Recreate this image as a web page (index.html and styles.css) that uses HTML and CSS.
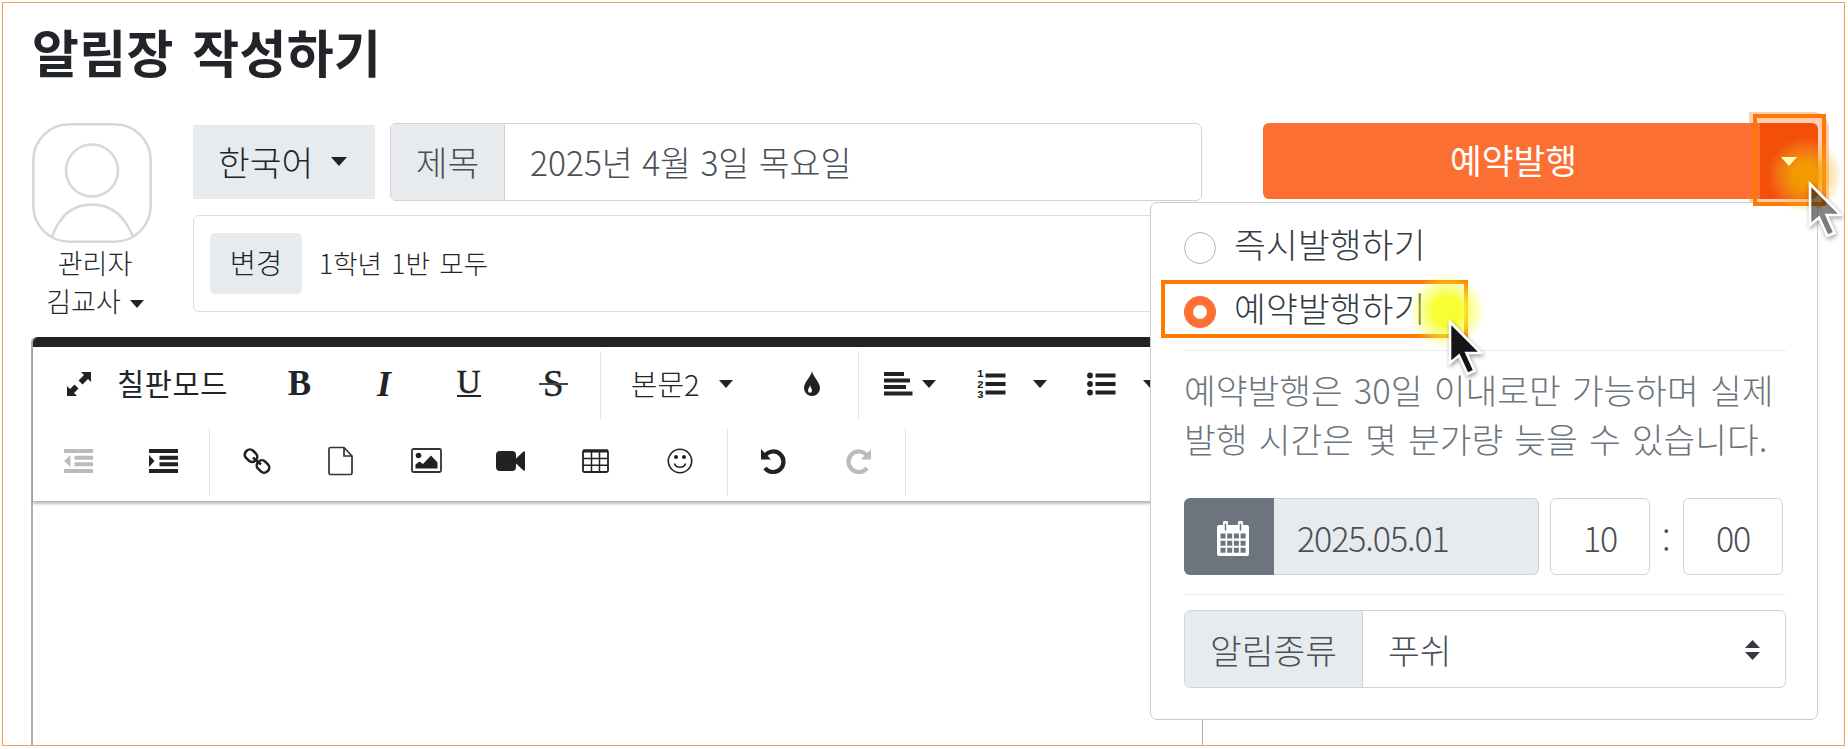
FILE: index.html
```html
<!DOCTYPE html>
<html lang="ko">
<head>
  <meta charset="UTF-8">
  <meta name="viewport" content="width=device-width, initial-scale=1">
  <title>알림장 작성하기</title>
  <link rel="stylesheet" href="styles.css">
</head>
<body>

<div class="page">
  <h1>알림장 작성하기</h1>

  <div class="compose">
    <div class="author">
      <svg class="avatar" viewBox="0 0 120 120">
        <rect x="1.3" y="1.3" width="117.4" height="117.4" rx="36"/>
        <circle cx="60" cy="47.5" r="26"/>
        <path d="M20 114C28 91 42 81.500 60 81.500S92 91 101 114"/>
      </svg>
      <div class="role">관리자</div>
      <div class="name">김교사<i class="caret"></i></div>
    </div>

    <div class="fields">
      <div class="title-row">
        <div class="lang">한국어<i class="caret"></i></div>
        <div class="input-group">
          <span class="addon">제목</span>
          <span class="value">2025년 4월 3일 목요일</span>
        </div>
      </div>
      <div class="target">
        <span class="change">변경</span>
        <span class="target-name">1학년 1반 모두</span>
      </div>
    </div>

    <div class="publish">
      <div class="btn-publish">예약발행</div>
      <div class="btn-toggle"><i class="caret"></i></div>

      <div class="dropdown">
        <div class="option"><span class="radio"></span><span class="option-text">즉시발행하기</span></div>
        <div class="option"><span class="radio checked"></span><span class="option-text">예약발행하기</span></div>
        <p class="help">예약발행은 30일 이내로만 가능하며 실제<br>발행 시간은 몇 분가량 늦을 수 있습니다.</p>
        <div class="datetime">
          <span class="cal">
            <svg width="32" height="36" viewBox="0 0 32 36">
              <path fill="#fff" d="M2 4h4V2a2.500 2.500 0 0 1 5 0v2h10V2a2.500 2.500 0 0 1 5 0v2h4a2 2 0 0 1 2 2v27a2 2 0 0 1-2 2H2a2 2 0 0 1-2-2V6a2 2 0 0 1 2-2z"/>
              <path stroke="#6c757d" stroke-width="1.500" d="M8.500 2.500v7M23.500 2.500v7"/>
              <path stroke="#6c757d" stroke-width="5" stroke-dasharray="5 1.700" d="M3.500 15h25.500M3.500 22.200h25.500M3.500 29.200h25.500"/>
            </svg>
          </span>
          <span class="date">2025.05.01</span>
          <span class="time">10</span>
          <span class="colon">:</span>
          <span class="time">00</span>
        </div>
        <div class="input-group kind">
          <span class="addon">알림종류</span>
          <span class="value">푸쉬</span>
          <svg class="sort" width="15" height="20" viewBox="0 0 15 20"><path fill="#343a40" d="M7.500 0L15 8H0zM7.500 20L0 12h15z"/></svg>
        </div>
      </div>
    </div>
  </div>

  <div class="editor">
    <div class="toolbar">
      <div class="tools">
        <div class="tool board">
          <svg width="26" height="26" viewBox="0 0 26 26"><path fill="#222" d="M15 1h10v10l-3-3-5.500 5.500-4-4L18 4zM11 25H1V15l3 3 4.500-4.500 4 4L8 22z"/><path stroke="#fff" stroke-width="1.800" d="M8 8l10 10"/></svg>
          <b>칠판모드</b>
        </div>
        <div class="tool serif bold">B</div>
        <div class="tool serif italic">I</div>
        <div class="tool serif"><span class="under">U</span></div>
        <div class="tool serif"><span class="strike">S</span></div>
        <div class="sep"></div>
        <div class="tool format">본문2<i class="caret"></i></div>
        <div class="tool"><svg width="18" height="26" viewBox="0 0 18 26"><path fill="#222" d="M9 0c1 6 8 11 8 17a8 8 0 0 1-16 0C1 11 8 6 9 0z"/><path fill="#fff" d="M7 14c.5 2.500 2 3.500 2 5.500a2 2.200 0 0 1-4 0c0-2 1.600-3 2-5.500z"/></svg></div>
        <div class="sep"></div>
        <div class="tool align"><svg width="29" height="24" viewBox="0 0 29 24"><path stroke="#222" stroke-width="4" d="M0 2h20M0 8.500h26M0 15h22M0 21.500h28.500"/></svg><i class="caret"></i></div>
        <div class="tool list">
          <svg width="29" height="34" viewBox="0 -2 29 34"><path stroke="#222" stroke-width="4" d="M8.500 6.500h20M8.500 15h20M8.500 23.500h20"/><g class="nums"><text x="0" y="8">1</text><text x="0" y="18.500">2</text><text x="0" y="29">3</text></g></svg>
          <i class="caret"></i>
        </div>
        <div class="tool list">
          <svg width="29" height="24" viewBox="0 0 29 24"><path stroke="#222" stroke-width="4" d="M8.500 3.500h20M8.500 12h20M8.500 20.500h20"/><g fill="#222"><circle cx="3" cy="3.500" r="2.900"/><circle cx="3" cy="12" r="2.900"/><circle cx="3" cy="20.500" r="2.900"/></g></svg>
          <i class="caret"></i>
        </div>
      </div>

      <div class="tools">
        <div class="tool"><svg width="29" height="24" viewBox="0 0 29 24"><path stroke="#bbb" stroke-width="4" d="M0 2h29M10.500 8.700h18.500M10.500 15.300h18.500M0 22h29"/><path fill="#bbb" d="M6.500 6v12L0 12z"/></svg></div>
        <div class="tool"><svg width="29" height="24" viewBox="0 0 29 24"><path stroke="#222" stroke-width="4" d="M0 2h29M10.500 8.700h18.500M10.500 15.300h18.500M0 22h29"/><path fill="#222" d="M0 6v12l5.500-6z"/></svg></div>
        <div class="sep"></div>
        <div class="tool"><svg width="28" height="28" viewBox="0 0 28 28" fill="none" stroke="#222" stroke-width="2.600"><rect x="1.500" y="3.700" width="13" height="10" rx="4.500" transform="rotate(45 8 8.700)"/><rect x="13.500" y="14.500" width="13" height="10" rx="4.500" transform="rotate(45 20 19.500)"/><path d="M10 10.500l8 7"/></svg></div>
        <div class="tool"><svg width="26" height="30" viewBox="0 0 26 30" fill="none" stroke="#333" stroke-width="1.700"><path d="M2.500 1.500H16l8 8.500v17a1.500 1.500 0 0 1-1.500 1.500h-20A1.500 1.500 0 0 1 1 27V3a1.500 1.500 0 0 1 1.500-1.500zM16 1.500V10h8"/></svg></div>
        <div class="tool"><svg width="31" height="25" viewBox="0 0 31 25"><rect x="1" y="1" width="29" height="23" rx="1.500" fill="none" stroke="#333" stroke-width="1.800"/><circle cx="7.500" cy="7.500" r="2.800" fill="#222"/><path fill="#222" d="M4.500 20.500v-4l4-3 3.500 2.500 8-8.500 6.500 7v6z"/></svg></div>
        <div class="tool"><svg width="29" height="22" viewBox="0 0 29 22"><path fill="#222" d="M4 1h12a4 4 0 0 1 4 4v3.500L27.500 1.500H29v19h-1.500L20 13.500V17a4 4 0 0 1-4 4H4a4 4 0 0 1-4-4V5a4 4 0 0 1 4-4z"/></svg></div>
        <div class="tool"><svg width="27" height="24" viewBox="0 0 27 24" fill="none" stroke="#222"><rect x="1" y="1.500" width="25" height="21.500" rx="1.500" stroke-width="1.800"/><path stroke-width="3" d="M1 2h25"/><path stroke-width="1.500" d="M9.500 3v20M17.500 3v20M1 9.500h25M1 16.200h25"/></svg></div>
        <div class="tool"><svg width="26" height="26" viewBox="0 0 26 26" fill="none" stroke="#222" stroke-width="1.600"><circle cx="13" cy="13" r="11.700"/><path d="M7.500 15.500c1.500 5 9.500 5 11 0"/><g fill="#222" stroke="none"><circle cx="9" cy="9" r="2"/><circle cx="17" cy="9" r="2"/></g></svg></div>
        <div class="sep"></div>
        <div class="tool"><svg width="27" height="26" viewBox="0 0 27 26"><path fill="none" stroke="#222" stroke-width="4.200" d="M5 7.500A10.300 10.300 0 1 1 5 20"/><path fill="#222" d="M1 1v10.500h10z"/></svg></div>
        <div class="tool"><svg width="27" height="26" viewBox="0 0 27 26"><path fill="none" stroke="#bbb" stroke-width="4.200" d="M22 7.500A10.300 10.300 0 1 0 22 20"/><path fill="#bbb" d="M26 1v10.500H16z"/></svg></div>
        <div class="sep"></div>
      </div>
    </div>
    <div class="content"></div>
  </div>

  <!-- guide marks -->
  <div class="mark mark-toggle"></div>
  <div class="mark mark-option"></div>
  <div class="glow glow-toggle"></div>
  <div class="glow glow-option"></div>
  <svg class="cursor cursor-toggle" viewBox="0 0 44 64"><path d="M4 4v41l9-7.500 8.500 18.500 7-3.200L20.500 35H35z"/></svg>
  <svg class="cursor cursor-option" viewBox="0 0 44 64"><path d="M4 4v41l9-7.500 8.500 18.500 7-3.200L20.500 35H35z"/></svg>
</div>

</body>
</html>
```
FILE: styles.css
```css
:root {
  --orange: #fb6f33;
  --mark: #ff7800;
  --gray: #e8ebee;
  --line: #ced4da;
  --dark: #222;
}
* { box-sizing: border-box; }
body {
  margin: 0;
  padding: 2px;
  height: 749px;
  overflow: hidden;
  background: #fff;
  color: #212529;
  font-family: "Noto Sans CJK KR", sans-serif;
  font-weight: 300;
  font-size: 34.5px;
  line-height: 1;
}
.page {
  position: relative;
  width: 1843px;
  height: 744px;
  padding: 0 26px 0 29px;
  border: 1px solid #f99f50;
  overflow: hidden;
}
h1 {
  margin: 0;
  padding-top: 22px;
  height: 120px;
  font-size: 51px;
  font-weight: 700;
  line-height: 52px;
  letter-spacing: .3px;
  word-spacing: 4px;
}
.caret {
  display: inline-block;
  border: solid transparent;
  border-width: 9px 8.500px 0;
  border-top-color: var(--dark);
}

/* compose form */
.compose {
  display: flex;
  height: 214px;
}
.author {
  width: 120px;
  margin-right: 41px;
  text-align: center;
  font-size: 27px;
}
.avatar {
  display: block;
  width: 120px;
  height: 120px;
  margin-bottom: 1px;
  fill: none;
  stroke: #d8d8d8;
  stroke-width: 2.6;
}
.role { line-height: 38px; padding-left: 6px; }
.name { line-height: 38px; padding-left: 6px; }
.name .caret {
  margin-left: 9px;
  vertical-align: 4px;
  border-width: 8px 7px 0;
}
.fields { width: 1010px; }
.title-row {
  display: flex;
  align-items: center;
  justify-content: space-between;
  height: 77px;
}
.lang {
  display: flex;
  align-items: center;
  width: 182px;
  height: 74px;
  padding-left: 25px;
  background: var(--gray);
}
.lang .caret { margin-left: 18px; }
.input-group {
  display: flex;
  align-items: stretch;
  width: 812px;
  height: 78px;
  border: 1px solid var(--line);
  border-radius: 6px;
  color: #495057;
  overflow: hidden;
}
.addon {
  display: flex;
  align-items: center;
  justify-content: center;
  width: 114px;
  border-right: 1px solid var(--line);
  background: var(--gray);
}
.value {
  display: flex;
  align-items: center;
  flex: 1;
  padding-left: 25px;
}
.title-row .value { font-size: 33.6px; }
.target {
  display: flex;
  align-items: center;
  height: 97px;
  margin-top: 15px;
  padding-left: 16px;
  border: 1px solid #dcdcdc;
  border-radius: 6px;
}
.change {
  width: 92px;
  height: 61px;
  border-radius: 5px;
  background: var(--gray);
  font-size: 28.5px;
  line-height: 57px;
  text-align: center;
}
.target-name {
  margin-left: 17px;
  font-size: 26.5px;
  word-spacing: 2px;
}

/* publish button + dropdown */
.publish {
  position: relative;
  display: flex;
  width: 555px;
  height: 76px;
  margin-left: 61px;
}
.btn-publish {
  width: 497px;
  padding-left: 4px;
  border-radius: 6px 0 0 6px;
  background: var(--orange);
  color: #fff;
  font-weight: 400;
  line-height: 73px;
  text-align: center;
}
.btn-toggle {
  display: flex;
  align-items: center;
  justify-content: center;
  width: 58px;
  padding-top: 1px;
  border-radius: 0 6px 6px 0;
  background: #f34f09;
  box-shadow: 0 0 0 11px rgba(251, 111, 51, .35);
}
.btn-toggle .caret {
  position: relative;
  border-top-color: #ffffb4;
  z-index: 5;
}
.dropdown {
  position: absolute;
  top: 79px;
  right: 0;
  width: 668px;
  height: 518px;
  padding: 12px 31px 0 33px;
  border: 1px solid #ccc;
  border-radius: 7px;
  background: #fff;
  z-index: 2;
}
.option {
  display: flex;
  align-items: center;
  height: 64px;
  color: #343a40;
}
.option-text {
  padding-bottom: 7px;
  letter-spacing: .2px;
}
.radio {
  width: 32px;
  height: 32px;
  margin: 1px 18px 0 0;
  border: 1px solid #adb5bd;
  border-radius: 50%;
}
.radio.checked { border: 9.500px solid var(--orange); }
.help {
  margin: 7px 0 0;
  padding-top: 14px;
  height: 148px;
  border-top: 1px solid #e9ecef;
  color: #6c757d;
  line-height: 49px;
  word-spacing: 1.500px;
  white-space: nowrap;
}
.datetime {
  display: flex;
  align-items: center;
  height: 97px;
  padding-bottom: 20px;
  border-bottom: 1px solid #e9ecef;
  color: #495057;
  font-size: 34px;
  letter-spacing: -1.1px;
}
.datetime span { height: 77px; line-height: 77px; }
.datetime .cal {
  display: flex;
  align-items: center;
  width: 90px;
  padding: 6px 0 0 33px;
  border-radius: 6px 0 0 6px;
  background: #6c757d;
}
.date {
  width: 265px;
  padding-left: 23px;
  border: 1px solid var(--line);
  border-left: 0;
  border-radius: 0 6px 6px 0;
  background: var(--gray);
}
.time {
  width: 100px;
  margin-left: 11px;
  border: 1px solid var(--line);
  border-radius: 6px;
  text-align: center;
}
.datetime .colon { width: 22px; padding-left: 12px; line-height: 84px; }
.kind {
  width: 602px;
  margin-top: 15px;
}
.kind .addon { width: 178px; }
.sort { margin: 29px 25px 0 0; }

/* editor */
.editor {
  width: 1172px;
  height: 420px;
  margin-left: -1px;
  border: solid #adb1b5;
  border-width: 0 1px 0 2px;
  border-radius: 5px 5px 0 0;
}
.toolbar {
  height: 165px;
  padding: 4px 0 0 3px;
  border-top: 10px solid var(--dark);
  border-radius: 5px 5px 0 0;
  border-bottom: 1px solid #bbb;
  box-shadow: 0 2px 3px rgba(0, 0, 0, .25);
  overflow: hidden;
}
.tools {
  display: flex;
  height: 77px;
}
.tool {
  display: flex;
  flex: none;
  align-items: center;
  justify-content: center;
  width: 84.7px;
  height: 65px;
  font-size: 29px;
}
.sep {
  flex: none;
  width: 1px;
  height: 68px;
  margin: 0 4px;
  background: #e4e4e4;
}
.board {
  width: 221px;
  padding-left: 30px;
  justify-content: flex-start;
}
.board b {
  margin-left: 25px;
  padding-bottom: 2px;
  font-size: 29.5px;
  letter-spacing: .6px;
}
.serif {
  font-family: "Liberation Serif", serif;
  font-size: 37px;
  font-weight: 400;
}
.bold { font-weight: 700; font-size: 35px; }
.italic { font-style: italic; font-weight: 700; font-size: 36px; }
.under {
  border-bottom: 2px solid var(--dark);
  font-size: 33px;
  line-height: 25px;
  -webkit-text-stroke: .5px var(--dark);
}
.strike {
  position: relative;
  -webkit-text-stroke: .5px var(--dark);
}
.strike::after {
  content: "";
  position: absolute;
  left: -4px;
  right: -4px;
  top: 18px;
  height: 2px;
  background: #444;
}
.tool .caret { border-width: 8px 7.500px 0; }
.format { width: 165px; padding-left: 26px; justify-content: flex-start; }
.format .caret { margin-left: 19px; }
.align { width: 93px; padding-left: 21px; justify-content: flex-start; }
.align .caret { margin-left: 9px; }
.list { width: 110px; padding-left: 21px; justify-content: flex-start; }
.list .caret { margin-left: 27px; }
.nums {
  fill: var(--dark);
  font: bold 11px "Liberation Mono", monospace;
}

/* guide marks */
.mark {
  position: absolute;
  border: 4.500px solid var(--mark);
  z-index: 3;
}
.mark-toggle { left: 1750px; top: 111px; width: 73px; height: 92px; }
.mark-option { left: 1158px; top: 277px; width: 307px; height: 58px; }
.glow {
  position: absolute;
  width: 76px;
  height: 76px;
  border-radius: 50%;
  z-index: 4;
}
.glow-toggle {
  left: 1764px;
  top: 134px;
  background: radial-gradient(closest-side, rgba(243, 158, 0, .95) 30%, rgba(245, 180, 40, .4) 65%, rgba(255, 255, 0, 0));
}
.glow-option {
  left: 1406px;
  top: 270px;
  background: radial-gradient(closest-side, rgba(247, 255, 50, 1) 35%, rgba(247, 255, 60, .55) 65%, rgba(255, 255, 0, 0));
}
.cursor {
  position: absolute;
  width: 44px;
  height: 64px;
  fill: #151515;
  stroke: #fff;
  stroke-width: 2.600;
  filter: drop-shadow(1px 2px 2px rgba(0, 0, 0, .4));
  z-index: 5;
}
.cursor-toggle { left: 1803px; top: 177px; fill: rgba(21, 21, 21, .42); }
.cursor-option { left: 1443px; top: 315px; }
```
